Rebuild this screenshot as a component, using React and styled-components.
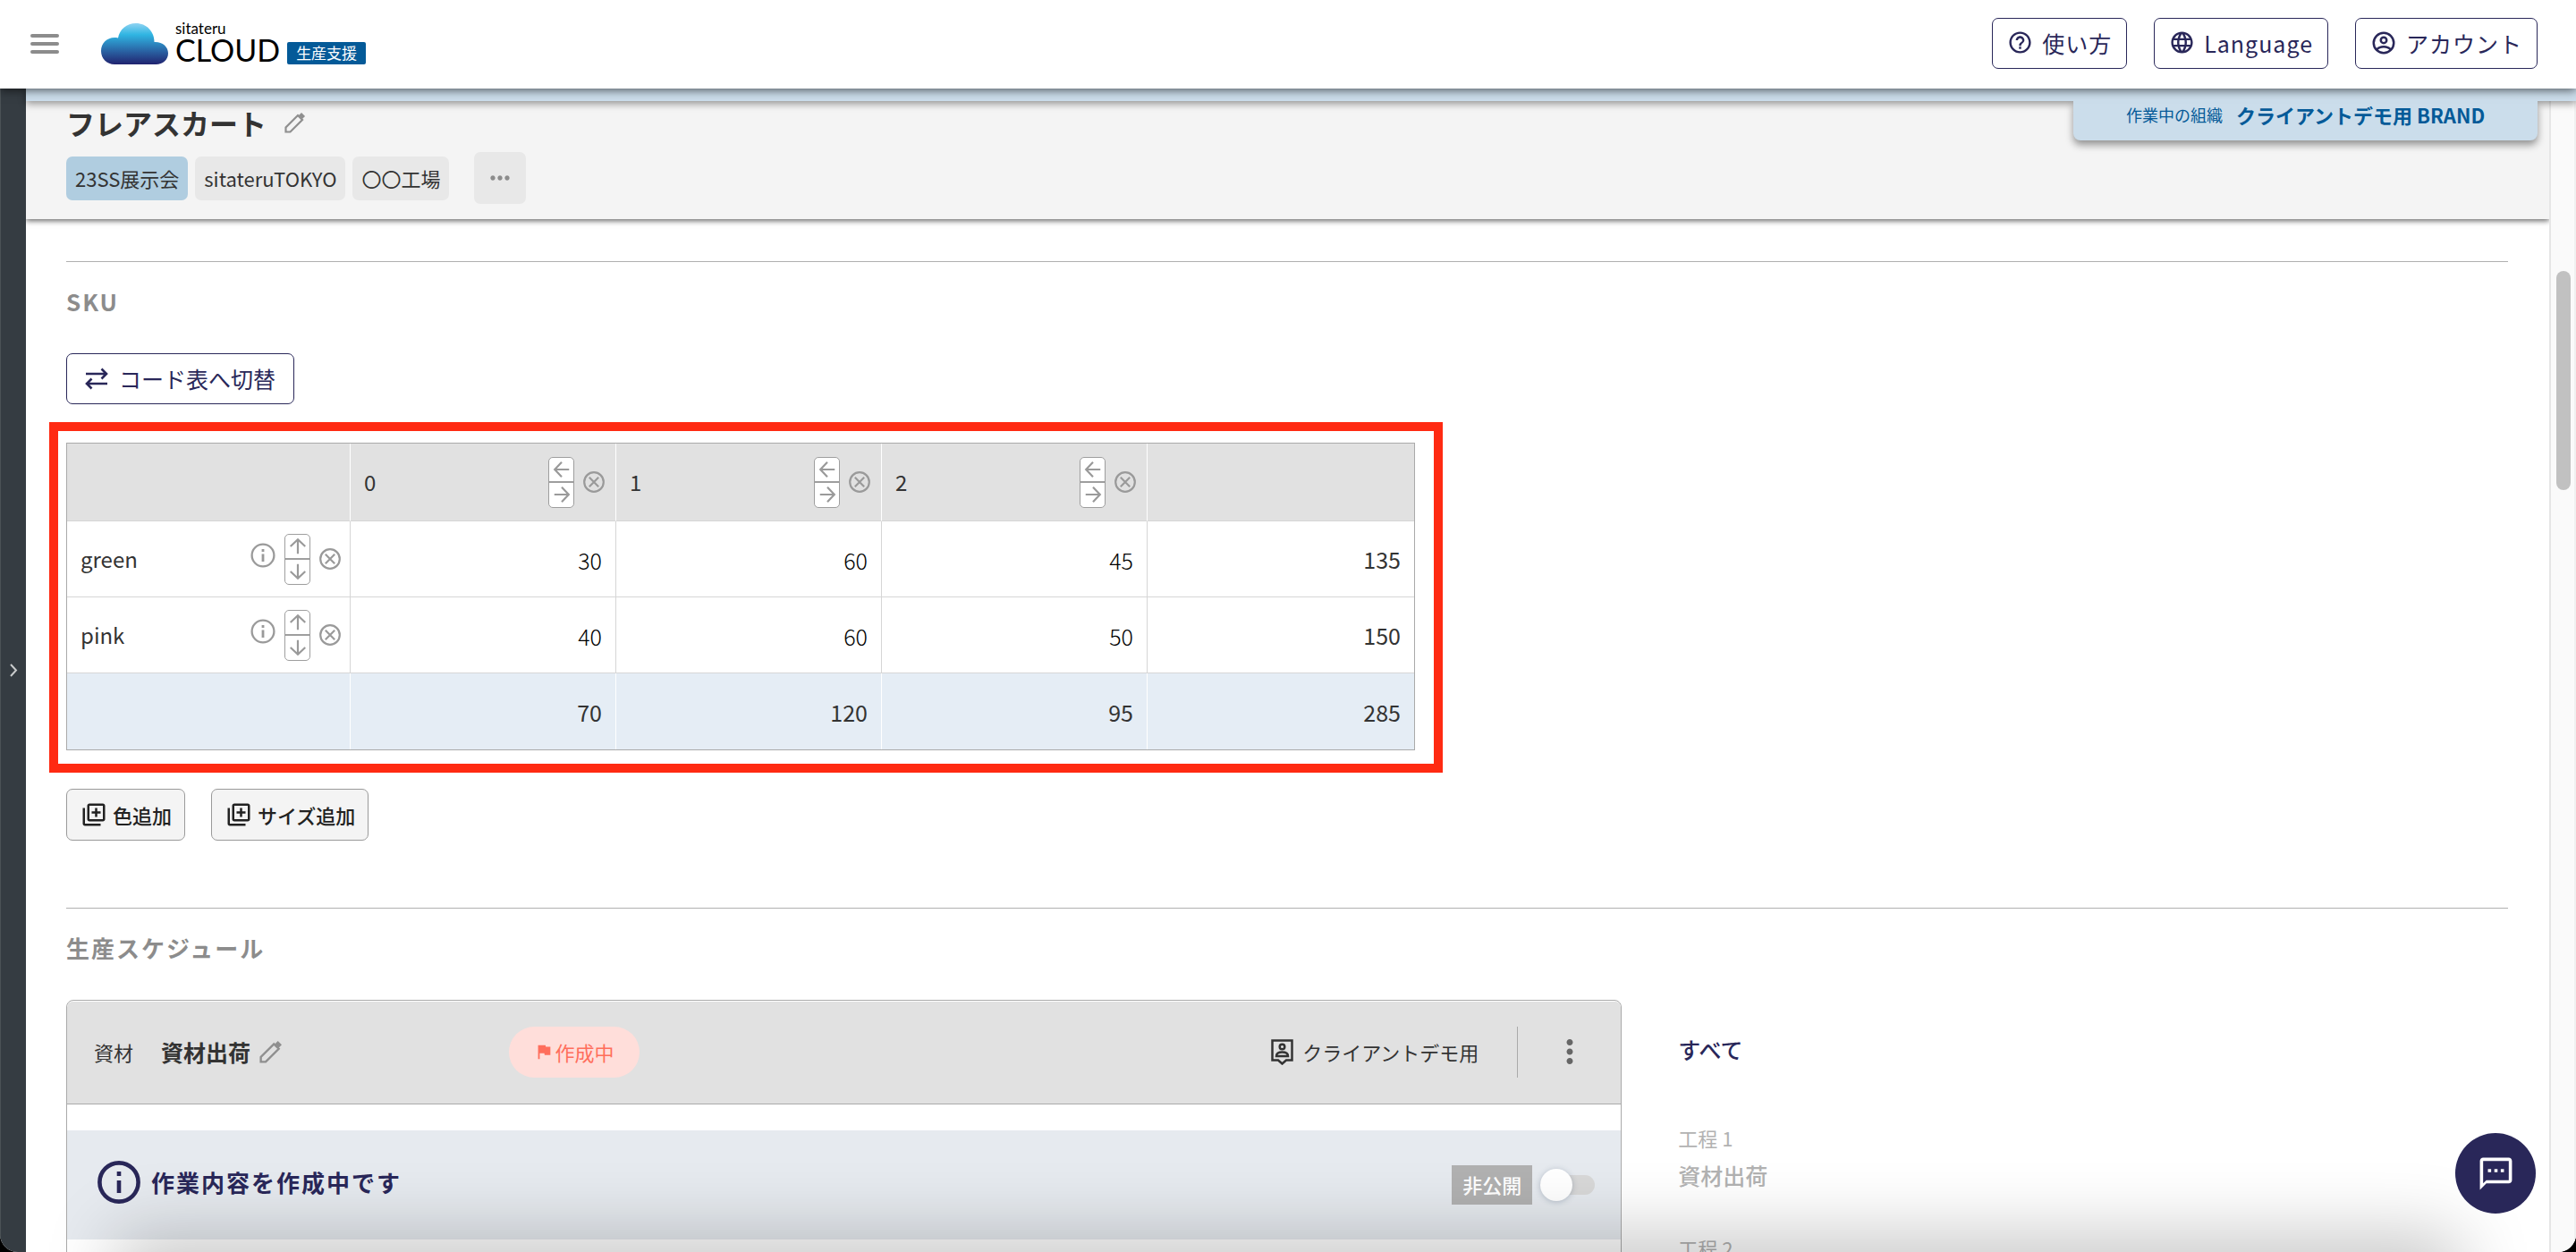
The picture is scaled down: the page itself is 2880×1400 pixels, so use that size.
import React, { useState } from "react";
import styled, { createGlobalStyle, css } from "styled-components";
import {
  MdHelpOutline,
  MdLanguage,
  MdOutlineTextsms,
  MdOutlineLibraryAdd,
  MdFlag,
  MdMoreHoriz,
  MdMoreVert,
} from "react-icons/md";

const navy = "#292759";
const blue = "#045a98";
const ink = "#333333";

const Global = createGlobalStyle`
  *, *::before, *::after { box-sizing: border-box; }
  html { background: #000; }
  body {
    margin: 0;
    color: ${ink};
    font-family: "Noto Sans CJK JP", "Noto Sans", sans-serif;
    font-size: 22px;
    line-height: 32px;
  }
  button, input { font: inherit; color: inherit; }
  button { cursor: pointer; }
  h1, h2, h3, p { margin: 0; }
  svg { display: block; flex: none; }
`;

const Shell = styled.div`
  display: flex;
  flex-direction: column;
  height: 100vh;
  overflow: hidden;
  background: #fff;
  border-radius: 0 0 20px 20px;
`;

const TopBar = styled.header`
  position: relative;
  z-index: 3;
  display: flex;
  flex: none;
  align-items: center;
  justify-content: space-between;
  height: 99px;
  padding: 0 43px 2px 34px;
  background: #fff;
  box-shadow: 0 2px 10px rgba(0, 0, 0, 0.6);
`;

const Brand = styled.div`
  display: flex;
  align-items: center;
  gap: 47px;
`;

const MenuButton = styled.button`
  display: flex;
  flex-direction: column;
  gap: 5px;
  width: 32px;
  padding: 0;
  border: 0;
  background: none;
`;

const MenuLine = styled.span`
  height: 4px;
  border-radius: 2px;
  background: #8c8c8c;
`;

const LogoLink = styled.a`
  display: flex;
  align-items: flex-end;
  gap: 8px;
  height: 46px;
  color: #000;
  text-decoration: none;
`;

const Wordmark = styled.span`
  display: flex;
  flex-direction: column;
  font-family: Lato, sans-serif;
`;

const WordSmall = styled.span`
  font-size: 17px;
  line-height: 17px;
`;

const WordLarge = styled.span`
  font-size: 34px;
  line-height: 32px;
`;

const ProductBadge = styled.span`
  height: 25px;
  padding: 0 10px;
  border-radius: 2px;
  background: ${blue};
  color: #fff;
  font-size: 17px;
  line-height: 23px;
`;

const TopActions = styled.nav`
  display: flex;
  gap: 30px;
`;

const OutlineButton = styled.button`
  display: flex;
  align-items: center;
  align-self: flex-start;
  gap: ${(p) => p.$gap || 10}px;
  height: 57px;
  padding: 0 ${(p) => p.$pad || 16}px 2px;
  border: 1px solid ${navy};
  border-radius: 7px;
  background: #fff;
  color: ${navy};
  font-size: 25px;
  letter-spacing: ${(p) => (p.$tracked ? "1px" : "normal")};
`;

const Body = styled.div`
  display: flex;
  flex: 1;
  min-height: 0;
`;

const SideRail = styled.aside`
  display: flex;
  flex: none;
  align-items: center;
  width: 29px;
  border-left: 1px solid #4b5256;
  background: #353c42;
`;

const RailButton = styled.button`
  display: flex;
  justify-content: center;
  width: 100%;
  padding: 0;
  border: 0;
  background: none;
  color: #c9cbcc;
`;

const Workspace = styled.div`
  position: relative;
  display: flex;
  flex: 1;
  flex-direction: column;
  min-width: 0;
`;

const BlueStrip = styled.div`
  position: relative;
  z-index: 2;
  flex: none;
  height: 14px;
  background: #cbddeb;
  box-shadow: 0 3px 8px rgba(0, 0, 0, 0.4);
`;

const OrgTab = styled.div`
  position: absolute;
  top: 14px;
  right: 43px;
  display: flex;
  align-items: center;
  justify-content: center;
  gap: 15px;
  width: 519px;
  height: 44px;
  padding-bottom: 14px;
  border-radius: 0 0 8px 8px;
  background: #cbddeb;
  box-shadow: 0 5px 8px rgba(0, 0, 0, 0.4);
  color: ${blue};
  clip-path: inset(0 -20px -20px -20px);
`;

const OrgLabel = styled.span`
  font-size: 18px;
`;

const OrgName = styled.strong`
  font-size: 22px;
`;

const Columns = styled.div`
  display: flex;
  flex: 1;
  min-height: 0;
`;

const Main = styled.main`
  flex: 1;
  min-width: 0;
  overflow: hidden;
`;

const ScrollRail = styled.div`
  display: flex;
  flex: none;
  justify-content: center;
  align-items: flex-start;
  width: 30px;
  padding: 190px 0 0 2px;
  border-left: 2px solid #e6e6e6;
  border-right: 2px solid #f0f0f0;
  background: #fafafa;
`;

const ScrollThumb = styled.div`
  width: 16px;
  height: 245px;
  border-radius: 8px;
  background: #c1c1c1;
`;

const ItemHeader = styled.div`
  position: relative;
  height: 132px;
  padding: 4px 45px 0;
  background: #f4f4f4;
  box-shadow: 0 2px 6px rgba(0, 0, 0, 0.6);
`;

const TitleRow = styled.div`
  display: flex;
  align-items: center;
  gap: 20px;
  height: 40px;
`;

const Title = styled.h1`
  font-size: 32px;
  line-height: 40px;
`;

const IconButton = styled.button`
  display: flex;
  padding: 0;
  border: 0;
  background: none;
  color: ${(p) => p.$color || "#8f8f8f"};
`;

const InfoButton = styled(IconButton)`
  padding-bottom: 8px;
`;

const TagRow = styled.div`
  display: flex;
  align-items: center;
  gap: 8px;
  margin-top: 13px;
`;

const Tag = styled.span`
  height: 49px;
  padding: 0 10px;
  border-radius: 7px;
  background: ${(p) => (p.$primary ? "#b0cde0" : "#e8e8e8")};
  line-height: 49px;
`;

const MoreTags = styled.button`
  display: flex;
  align-items: center;
  justify-content: center;
  width: 58px;
  height: 58px;
  margin-left: 20px;
  border: 0;
  border-radius: 7px;
  background: #e8e8e8;
  color: #8c8c8c;
`;

const Content = styled.div`
  padding: 47px 46px 0 45px;
`;

const Section = styled.section`
  padding: 26px 0 75px;
  border-top: 1px solid #b0b0b0;
`;

const SectionTitle = styled.h2`
  margin-bottom: 40px;
  color: #8c8c8c;
  font-size: 26px;
  line-height: 36px;
  letter-spacing: 2px;
`;

const Highlight = styled.div`
  width: fit-content;
  margin: 20px 0 18px -19px;
  padding: 13px 21px 15px 9px;
  border: 10px solid #ff2a12;
`;

const SkuTable = styled.table`
  width: 1508px;
  border: 1px solid #aaaaaa;
  border-collapse: separate;
  border-spacing: 0;
  table-layout: fixed;
`;

const cell = css`
  height: 85px;
  padding: 0 15px;
  border-right: 1px solid #d6d6d6;
  border-bottom: 1px solid #d6d6d6;
  &:last-child { border-right: 0; }
`;

const HeadCell = styled.th`
  ${cell}
  width: ${(p) => p.$width || 297}px;
  height: 87px;
  padding-right: 12px;
  border-right-color: #fff;
  background: #e1e1e1;
  font-size: 24px;
  font-weight: 400;
  text-align: left;
`;

const NameCell = styled.th`
  ${cell}
  padding-right: 10px;
  font-size: 24px;
  font-weight: 400;
  text-align: left;
`;

const AmountCell = styled.td`
  ${cell}
  font-size: 25px;
  text-align: right;
`;

const TotalCell = styled(AmountCell)`
  border-right-color: #fff;
  border-bottom: 0;
  background: #e5edf5;
`;

const AmountInput = styled.input`
  width: 100%;
  padding: 2px 0 0;
  border: 0;
  outline: 0;
  background: none;
  color: #000;
  font-weight: 300;
  text-align: right;
`;

const CellLine = styled.div`
  display: flex;
  align-items: center;
`;

const CellText = styled.span`
  flex: 1;
`;

const Tools = styled.span`
  display: flex;
  align-items: center;
  gap: 10px;
`;

const MovePair = styled.span`
  display: flex;
  flex-direction: column;
  width: 29px;
  height: 57px;
  overflow: hidden;
  border: 1px solid #9e9e9e;
  border-radius: 5px;
  background: #fff;
`;

const MoveButton = styled.button`
  display: flex;
  flex: 1;
  align-items: center;
  justify-content: center;
  padding: 0;
  border: 0;
  background: none;
  color: #9a9a9a;
  & + & { border-top: 2px solid #9e9e9e; }
`;

const AddRow = styled.div`
  display: flex;
  gap: 29px;
`;

const AddButton = styled.button`
  display: flex;
  align-items: center;
  gap: 6px;
  height: 58px;
  padding: 0 14px 1px 15px;
  border: 1px solid #9a9a9a;
  border-radius: 7px;
  background: #f4f4f4;
  color: #222;
  font-size: 22px;
  font-weight: 500;
`;

const Schedule = styled.div`
  display: grid;
  grid-template-columns: 15fr 8fr;
  gap: 63px;
`;

const Card = styled.article`
  height: 420px;
  padding-top: 1px;
  overflow: hidden;
  border: 1px solid #aaaaaa;
  border-radius: 8px 8px 0 0;
`;

const CardHeader = styled.div`
  display: flex;
  align-items: center;
  height: 115px;
  padding: 0 36px 2px 30px;
  border-bottom: 1px solid #aaaaaa;
  border-radius: 6px 6px 0 0;
  background: #e1e1e1;
`;

const CardName = styled.div`
  display: flex;
  align-items: center;
  gap: 31px;
  width: 464px;
`;

const CardTitle = styled.div`
  display: flex;
  align-items: center;
  gap: 10px;
`;

const CardHeading = styled.h3`
  font-size: 25px;
`;

const StatusPill = styled.span`
  display: flex;
  align-items: center;
  justify-content: center;
  gap: 1px;
  width: 146px;
  height: 57px;
  border-radius: 29px;
  background: #ffdeda;
  color: #ff6e5c;
`;

const Assignee = styled.div`
  display: flex;
  align-items: center;
  gap: 10px;
  height: 57px;
  margin-left: auto;
  padding-right: 43px;
  border-right: 1px solid #aaaaaa;
`;

const MenuSpot = styled.div`
  margin-left: 37px;
`;

const Notice = styled.div`
  display: flex;
  align-items: center;
  justify-content: space-between;
  height: 122px;
  margin-top: 29px;
  padding: 0 29px 0 34px;
  background: #e6eaef;
`;

const NoticeText = styled.p`
  display: flex;
  align-items: center;
  gap: 12px;
  padding-bottom: 7px;
  color: ${navy};
  font-size: 26px;
  font-weight: 700;
  letter-spacing: 2px;
`;

const PublishLabel = styled.label`
  display: flex;
  align-items: center;
  gap: 9px;
`;

const PublishState = styled.span`
  height: 44px;
  padding: 0 12px;
  background: #b1b1b1;
  color: #fff;
  font-weight: 500;
  line-height: 42px;
`;

const Toggle = styled.input`
  display: flex;
  align-items: center;
  width: 61px;
  height: 22px;
  margin: 0;
  border-radius: 11px;
  appearance: none;
  background: #d8d8d8;
  &::before {
    content: "";
    width: 36px;
    height: 36px;
    border-radius: 50%;
    background: #fff;
    box-shadow: 0 1px 6px rgba(60, 80, 110, 0.3);
  }
  &:checked { justify-content: flex-end; background: ${navy}; }
`;

const StepNav = styled.nav`
  display: flex;
  flex-direction: column;
  padding-top: 37px;
`;

const StepLink = styled.a`
  color: ${(p) => (p.$active ? navy : "#b2b2b2")};
  font-size: 25px;
  font-weight: 500;
  line-height: 36px;
  text-decoration: none;
`;

const Step = styled.div`
  margin-bottom: 46px;
`;

const Steps = styled.div`
  margin-top: 64px;
`;

const StepNumber = styled.p`
  margin-bottom: 6px;
  color: #b2b2b2;
  line-height: 35px;
`;

const ChatButton = styled.button`
  position: fixed;
  right: 45px;
  bottom: 43px;
  z-index: 6;
  display: flex;
  align-items: center;
  justify-content: center;
  width: 90px;
  height: 90px;
  border: 0;
  border-radius: 50%;
  background: ${navy};
  color: #fff;
`;

const BottomShade = styled.div`
  position: fixed;
  right: 150px;
  bottom: -60px;
  left: 150px;
  z-index: 5;
  height: 60px;
  box-shadow: 0 0 80px 20px rgba(0, 0, 0, 0.22);
  pointer-events: none;
  clip-path: inset(-120px -121px 0 -121px);
`;

const Line = ({ size, width, children, box = 24 }) => (
  <svg
    width={size}
    height={size}
    viewBox={`0 0 ${box} ${box}`}
    fill="none"
    stroke="currentColor"
    strokeWidth={width}
    aria-hidden="true"
  >
    {children}
  </svg>
);

const arrows = {
  left: "M21 12H4M12 3L3.500 12l8.500 9",
  right: "M3 12h17M12 3l8.500 9-8.500 9",
  up: "M12 21V4M3 12l9-8.500 9 8.500",
  down: "M12 3v17M3 12l9 8.500 9-8.500",
};

const Arrow = ({ dir }) => (
  <Line size={22} width={2.4}>
    <path d={arrows[dir]} />
  </Line>
);

const CircleX = () => (
  <Line size={24} width={2.2}>
    <circle cx="12" cy="12" r="10.8" />
    <path d="M6.800 6.800l10.400 10.400M17.200 6.800L6.800 17.200" />
  </Line>
);

const InfoThin = () => (
  <Line size={28} width={2.3} box={28}>
    <circle cx="14" cy="14" r="12.4" />
    <path d="M14 12.500v8.500M14 7v3" strokeWidth="2.8" />
  </Line>
);

const InfoBold = () => (
  <Line size={48} width={4.6} box={48}>
    <circle cx="24" cy="24" r="21.6" />
    <path d="M24 22v14M24 12v5" />
  </Line>
);

const Pencil = ({ size }) => (
  <Line size={size} width={2.2}>
    <path d="M1.500 22.500v-5L15 4l5 5L6.500 22.500z" />
    <path d="M17.500 2.500L21.500 6.500" strokeWidth="4.4" />
  </Line>
);

const Cloud = () => (
  <svg width="75" height="46" viewBox="0 0 75 46" aria-hidden="true">
    <defs>
      <linearGradient id="cloudFill" x1="0" y1="0" x2="0" y2="1">
        <stop offset="0" stopColor="#8fd3f2" />
        <stop offset="0.28" stopColor="#2fb5e2" />
        <stop offset="0.65" stopColor="#2a68a8" />
        <stop offset="1" stopColor="#21236f" />
      </linearGradient>
    </defs>
    <path
      fill="url(#cloudFill)"
      d="M15 46C6.500 46 0 39.500 0 31S6.500 16 15 16c1.400 0 2.700.1 4 .5C20.500 7 28.500 0 39 0c11.500 0 20.500 9 20.500 20.500v.6c8.600-.6 15.500 5 15.500 12.400C75 41 69 46 61.500 46z"
    />
  </svg>
);

const Swap = () => (
  <Line size={26} width={2.6} box={26}>
    <path d="M1 8h23M18.500 2.500L24 8l-5.500 5.500M25 19H2M7.500 13.500L2 19l5.500 5.500" />
  </Line>
);

const Person = () => (
  <Line size={30} width={2}>
    <circle cx="12" cy="12" r="9" />
    <circle cx="12" cy="9.500" r="2.600" />
    <path d="M5.800 18c1.500-1.900 3.800-2.600 6.200-2.600s4.700.7 6.200 2.600" />
  </Line>
);

const Contact = () => (
  <svg width="25" height="29" viewBox="0 0 25 29" fill="none" stroke="currentColor" strokeWidth="2.500" aria-hidden="true">
    <path d="M1.500 1.500h22v22h-6.500l-4.500 4-4.500-4h-6.500z" />
    <circle cx="12.500" cy="8.500" r="2.800" />
    <path d="M6 19c0-4 3.500-4.500 6.500-4.500S19 15 19 19z" />
  </svg>
);

const Chevron = () => (
  <svg width="9" height="15" viewBox="0 0 9 15" fill="none" stroke="currentColor" strokeWidth="2" aria-hidden="true">
    <path d="M1 1l6 6.500L1 14" />
  </svg>
);

const sizes = ["0", "1", "2"];
const colors = [
  { name: "green", amounts: [30, 60, 45], total: 135 },
  { name: "pink", amounts: [40, 60, 50], total: 150 },
];
const totals = [70, 120, 95, 285];

function Mover({ label, back, forward }) {
  return (
    <MovePair>
      <MoveButton aria-label={`${label} ${back}`}><Arrow dir={back} /></MoveButton>
      <MoveButton aria-label={`${label} ${forward}`}><Arrow dir={forward} /></MoveButton>
    </MovePair>
  );
}

function Sku() {
  return (
    <Section>
      <SectionTitle>SKU</SectionTitle>
      <OutlineButton $pad={20} $gap={12}>
        <Swap />
        コード表へ切替
      </OutlineButton>
      <Highlight>
        <SkuTable>
          <thead>
            <tr>
              <HeadCell $width={317} />
              {sizes.map((s) => (
                <HeadCell key={s} scope="col">
                  <CellLine>
                    <CellText>{s}</CellText>
                    <Tools>
                      <Mover label={s} back="left" forward="right" />
                      <IconButton $color="#9a9a9a" aria-label={`${s} ×`}><CircleX /></IconButton>
                    </Tools>
                  </CellLine>
                </HeadCell>
              ))}
              <HeadCell $width={298} />
            </tr>
          </thead>
          <tbody>
            {colors.map((c) => (
              <tr key={c.name}>
                <NameCell scope="row">
                  <CellLine>
                    <CellText>{c.name}</CellText>
                    <Tools>
                      <InfoButton $color="#9a9a9a" aria-label={`${c.name} info`}><InfoThin /></InfoButton>
                      <Mover label={c.name} back="up" forward="down" />
                      <IconButton $color="#9a9a9a" aria-label={`${c.name} ×`}><CircleX /></IconButton>
                    </Tools>
                  </CellLine>
                </NameCell>
                {c.amounts.map((n, i) => (
                  <AmountCell key={i}>
                    <AmountInput aria-label={`${c.name} ${sizes[i]}`} defaultValue={n} />
                  </AmountCell>
                ))}
                <AmountCell>{c.total}</AmountCell>
              </tr>
            ))}
            <tr>
              <TotalCell />
              {totals.map((n) => <TotalCell key={n}>{n}</TotalCell>)}
            </tr>
          </tbody>
        </SkuTable>
      </Highlight>
      <AddRow>
        <AddButton><MdOutlineLibraryAdd size={30} />色追加</AddButton>
        <AddButton><MdOutlineLibraryAdd size={30} />サイズ追加</AddButton>
      </AddRow>
    </Section>
  );
}

function ProductionSchedule() {
  const [open, setOpen] = useState(false);
  return (
    <Section>
      <SectionTitle>生産スケジュール</SectionTitle>
      <Schedule>
        <Card>
          <CardHeader>
            <CardName>
              <span>資材</span>
              <CardTitle>
                <CardHeading>資材出荷</CardHeading>
                <IconButton aria-label="資材出荷"><Pencil size={26} /></IconButton>
              </CardTitle>
            </CardName>
            <StatusPill><MdFlag size={22} />作成中</StatusPill>
            <Assignee><Contact />クライアントデモ用</Assignee>
            <MenuSpot>
              <IconButton $color="#666" aria-label="menu"><MdMoreVert size={42} /></IconButton>
            </MenuSpot>
          </CardHeader>
          <Notice>
            <NoticeText><InfoBold />作業内容を作成中です</NoticeText>
            <PublishLabel>
              <PublishState>非公開</PublishState>
              <Toggle type="checkbox" role="switch" checked={open} onChange={(e) => setOpen(e.target.checked)} />
            </PublishLabel>
          </Notice>
        </Card>
        <StepNav>
          <StepLink href="#all" $active>すべて</StepLink>
          <Steps>
            <Step>
              <StepNumber>工程 1</StepNumber>
              <StepLink href="#step1">資材出荷</StepLink>
            </Step>
            <Step>
              <StepNumber>工程 2</StepNumber>
            </Step>
          </Steps>
        </StepNav>
      </Schedule>
    </Section>
  );
}

export default function App() {
  return (
    <>
      <Global />
      <Shell>
        <TopBar>
          <Brand>
            <MenuButton aria-label="menu"><MenuLine /><MenuLine /><MenuLine /></MenuButton>
            <LogoLink href="#home">
              <Cloud />
              <Wordmark>
                <WordSmall>sitateru</WordSmall>
                <WordLarge>CLOUD</WordLarge>
              </Wordmark>
              <ProductBadge>生産支援</ProductBadge>
            </LogoLink>
          </Brand>
          <TopActions>
            <OutlineButton $tracked><MdHelpOutline size={29} />使い方</OutlineButton>
            <OutlineButton $tracked><MdLanguage size={29} />Language</OutlineButton>
            <OutlineButton $tracked><Person />アカウント</OutlineButton>
          </TopActions>
        </TopBar>
        <Body>
          <SideRail><RailButton aria-label="open"><Chevron /></RailButton></SideRail>
          <Workspace>
            <BlueStrip>
              <OrgTab>
                <OrgLabel>作業中の組織</OrgLabel>
                <OrgName>クライアントデモ用 BRAND</OrgName>
              </OrgTab>
            </BlueStrip>
            <Columns>
              <Main>
                <ItemHeader>
                  <TitleRow>
                    <Title>フレアスカート</Title>
                    <IconButton aria-label="フレアスカート"><Pencil size={24} /></IconButton>
                  </TitleRow>
                  <TagRow>
                    <Tag $primary>23SS展示会</Tag>
                    <Tag>sitateruTOKYO</Tag>
                    <Tag>〇〇工場</Tag>
                    <MoreTags aria-label="more"><MdMoreHoriz size={32} /></MoreTags>
                  </TagRow>
                </ItemHeader>
                <Content>
                  <Sku />
                  <ProductionSchedule />
                </Content>
              </Main>
              <ScrollRail><ScrollThumb /></ScrollRail>
            </Columns>
          </Workspace>
        </Body>
        <BottomShade />
        <ChatButton aria-label="chat"><MdOutlineTextsms size={43} /></ChatButton>
      </Shell>
    </>
  );
}
